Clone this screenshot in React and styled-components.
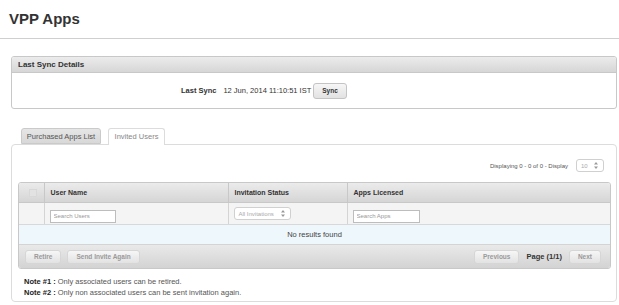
import React from 'react'
import styled, { createGlobalStyle } from 'styled-components'

const GlobalStyle = createGlobalStyle`
    body {
        margin: 0;
        background: #fff;
        font-family: 'Liberation Sans', Arial, sans-serif;
        color: #333;
    }
`

const TitleBar = styled.div`
    box-sizing: border-box;
    height: 39px;
    padding: 10px 9px 0;
    border-bottom: 1px solid #cfcfcf;
`

const Title = styled.h1`
    margin: 0;
    font-size: 15px;
    line-height: 17px;
    font-weight: bold;
    color: #333;
`

const Content = styled.div`
    padding: 17px 2px 0 11px;
`

const Panel = styled.div`
    border: 1px solid #c8c8c8;
    border-radius: 3px;
    overflow: hidden;
`

const PanelHeader = styled.div`
    height: 15px;
    line-height: 15px;
    padding: 0 6px;
    font-size: 8px;
    font-weight: bold;
    color: #333;
    background: linear-gradient(to bottom, #ececec, #d6d6d6);
    border-bottom: 1px solid #c8c8c8;
`

const SyncRow = styled.div`
    height: 35px;
    display: flex;
    align-items: center;
    padding-left: 169px;
    font-size: 7.5px;
`

const Label = styled.span`
    font-weight: bold;
    color: #333;
    margin-right: 7px;
`

const Value = styled.span`
    color: #333;
    margin-right: 2px;
`

const Button = styled.button`
    box-sizing: border-box;
    height: ${p => p.$h || 14}px;
    padding: 0 ${p => p.$px || 7}px;
    font-family: inherit;
    font-size: 6.5px;
    font-weight: bold;
    color: ${p => (p.$disabled ? '#9a9a9a' : '#333')};
    background: linear-gradient(to bottom, #f6f6f6, #e2e2e2);
    border: 1px solid ${p => (p.$disabled ? '#d6d6d6' : '#c4c4c4')};
    border-radius: 3px;
    cursor: pointer;
`

const Tabs = styled.div`
    display: flex;
    gap: 7px;
    margin-top: 19px;
    padding-left: 10px;
    position: relative;
    z-index: 1;
`

const Tab = styled.div`
    box-sizing: border-box;
    width: ${p => p.$w}px;
    height: ${p => (p.$active ? 17 : 16)}px;
    margin-bottom: ${p => (p.$active ? -1 : 0)}px;
    line-height: 16px;
    text-align: center;
    font-size: 7.5px;
    color: ${p => (p.$active ? '#888' : '#555')};
    background: ${p => (p.$active ? '#fff' : 'linear-gradient(to bottom, #e6e6e6, #d8d8d8)')};
    border: 1px solid ${p => (p.$active ? '#dcdcdc' : '#cacaca')};
    border-bottom: ${p => (p.$active ? 'none' : '1px solid #cacaca')};
    border-radius: 3px 3px 0 0;
`

const TabPanel = styled.div`
    border: 1px solid #dcdcdc;
    border-radius: 4px;
    padding: 14px 5px 3px 6px;
`

const DisplayRow = styled.div`
    display: flex;
    justify-content: flex-end;
    align-items: center;
    gap: 8px;
    padding-right: 7px;
    font-size: 6px;
    color: #555;
`

const SelectBox = styled.div`
    box-sizing: border-box;
    width: ${p => p.$w}px;
    height: 13px;
    display: flex;
    align-items: center;
    justify-content: space-between;
    padding: 0 5px 0 4px;
    font-size: 6px;
    color: #aaa;
    background: #fff;
    border: 1px solid #d0d0d0;
    border-radius: 3px;
`

const TableWrap = styled.div`
    margin-top: 10px;
    border: 1px solid #c8c8c8;
    border-radius: 3px;
    overflow: hidden;
`

const Table = styled.table`
    width: 100%;
    border-collapse: collapse;
    table-layout: fixed;
`

const Th = styled.th`
    height: 19px;
    padding: 0 6px;
    text-align: left;
    font-size: 7px;
    font-weight: bold;
    color: #333;
    background: linear-gradient(to bottom, #ebebeb, #d5d5d5);
    border-left: ${p => (p.$first ? 'none' : '1px solid #c8c8c8')};
    border-bottom: 1px solid #c8c8c8;
`

const Td = styled.td`
    height: 21px;
    padding: 0 4px 0 5px;
    background: #f4f4f4;
    border-left: ${p => (p.$first ? 'none' : '1px solid #d4d4d4')};
    border-bottom: 1px solid #d8d8d8;
`

const EmptyCell = styled.td`
    height: 19px;
    padding: 0;
    text-align: center;
    font-size: 7.5px;
    color: #444;
    background: #eef7fc;
    border-bottom: 1px solid #d4d4d4;
`

const CheckBox = styled.span`
    display: block;
    width: 6px;
    height: 6px;
    margin-left: 4px;
    background: #e2e2e2;
    border: 1px solid #d8d8d8;
`

const SearchInput = styled.input`
    box-sizing: border-box;
    width: ${p => p.$w}px;
    height: 13px;
    padding: 0 3px;
    font-family: inherit;
    font-size: 6px;
    color: #333;
    background: #fff;
    border: 1px solid #bdbdbd;
    outline: none;

    &::placeholder {
        color: #999;
    }
`

const FooterBar = styled.div`
    height: 23px;
    display: flex;
    align-items: center;
    gap: 6px;
    padding: 0 9px 0 6px;
    background: linear-gradient(to bottom, #e9e9e9, #d3d3d3);
`

const Spacer = styled.div`
    flex: 1;
`

const PageLabel = styled.span`
    margin: 0 1px;
    font-size: 7.5px;
    font-weight: bold;
    color: #333;
`

const Notes = styled.div`
    margin-top: 7px;
    padding-left: 6px;
    font-size: 7.5px;
    line-height: 11px;
    color: #555;
`

const NoteTitle = styled.b`
    color: #222;
`

function Arrows() {
    return (
        <svg width="4" height="7" viewBox="0 0 4 7">
            <path d="M2 0 L4 2.6 L0 2.6 Z M2 7 L4 4.4 L0 4.4 Z" fill="#999" />
        </svg>
    )
}

export default function App() {
    return (
        <>
            <GlobalStyle />
            <TitleBar>
                <Title>VPP Apps</Title>
            </TitleBar>
            <Content>
                <Panel>
                    <PanelHeader>Last Sync Details</PanelHeader>
                    <SyncRow>
                        <Label>Last Sync</Label>
                        <Value>12 Jun, 2014 11:10:51 IST</Value>
                        <Button $h={16} $px={8}>Sync</Button>
                    </SyncRow>
                </Panel>

                <Tabs>
                    <Tab $w={80}>Purchased Apps List</Tab>
                    <Tab $w={57} $active>Invited Users</Tab>
                </Tabs>
                <TabPanel>
                    <DisplayRow>
                        <span>Displaying 0 - 0 of 0 - Display</span>
                        <SelectBox $w={28}>
                            <span>10</span>
                            <Arrows />
                        </SelectBox>
                    </DisplayRow>

                    <TableWrap>
                        <Table>
                            <colgroup>
                                <col style={{ width: 25 }} />
                                <col style={{ width: 184 }} />
                                <col style={{ width: 119 }} />
                                <col />
                            </colgroup>
                            <thead>
                                <tr>
                                    <Th $first><CheckBox /></Th>
                                    <Th>User Name</Th>
                                    <Th>Invitation Status</Th>
                                    <Th>Apps Licensed</Th>
                                </tr>
                            </thead>
                            <tbody>
                                <tr>
                                    <Td $first />
                                    <Td><SearchInput $w={66} placeholder="Search Users" /></Td>
                                    <Td>
                                        <SelectBox $w={57}>
                                            <span>All Invitations</span>
                                            <Arrows />
                                        </SelectBox>
                                    </Td>
                                    <Td><SearchInput $w={67} placeholder="Search Apps" /></Td>
                                </tr>
                                <tr>
                                    <EmptyCell colSpan={4}>No results found</EmptyCell>
                                </tr>
                            </tbody>
                        </Table>
                        <FooterBar>
                            <Button $disabled $px={8}>Retire</Button>
                            <Button $disabled $px={8}>Send Invite Again</Button>
                            <Spacer />
                            <Button $disabled $px={8}>Previous</Button>
                            <PageLabel>Page (1/1)</PageLabel>
                            <Button $disabled $px={8}>Next</Button>
                        </FooterBar>
                    </TableWrap>

                    <Notes>
                        <div><NoteTitle>Note #1 :</NoteTitle> Only associated users can be retired.</div>
                        <div><NoteTitle>Note #2 :</NoteTitle> Only non associated users can be sent invitation again.</div>
                    </Notes>
                </TabPanel>
            </Content>
        </>
    )
}
